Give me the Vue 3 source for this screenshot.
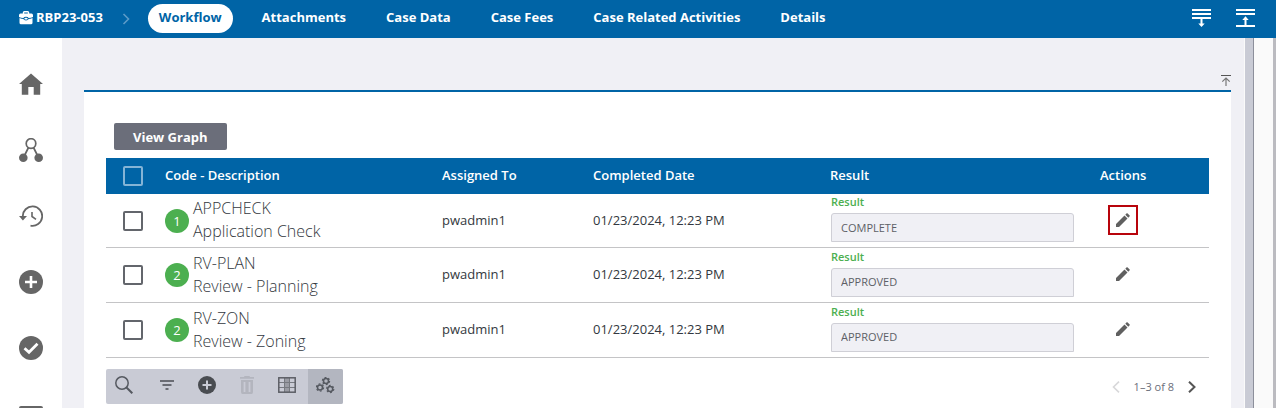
<script setup>
import { ref } from 'vue'

const tabs = ['Workflow', 'Attachments', 'Case Data', 'Case Fees', 'Case Related Activities', 'Details']
const rows = ref([
  { step: 1, code: 'APPCHECK', description: 'Application Check', assigned: 'pwadmin1', date: '01/23/2024, 12:23 PM', result: 'COMPLETE', marked: true },
  { step: 2, code: 'RV-PLAN', description: 'Review - Planning', assigned: 'pwadmin1', date: '01/23/2024, 12:23 PM', result: 'APPROVED', marked: false },
  { step: 2, code: 'RV-ZON', description: 'Review - Zoning', assigned: 'pwadmin1', date: '01/23/2024, 12:23 PM', result: 'APPROVED', marked: false },
])
</script>

<template>
  <div class="shell">
    <header class="topbar">
      <a href="#case" class="case-link">
        <svg width="14" height="14" viewBox="0 0 14 14">
          <path d="M4.500 3V1.600Q4.500 .8 5.300 .8H8.700Q9.500 .8 9.500 1.600V3" fill="none" stroke="#fff" stroke-width="1.400" />
          <path d="M1.500 2.600H12.500Q14 2.600 14 4.200V6Q12 6.900 9.700 7.100A2.900 2 0 0 0 4.300 7.100Q2 6.900 0 6V4.200Q0 2.600 1.500 2.600Z" fill="#fff" />
          <path d="M.5 7Q2.500 7.900 4.300 8.100A2.800 2 0 0 0 9.700 8.100Q11.500 7.900 13.500 7V11.800Q13.500 13.300 12 13.300H2Q.5 13.300 .5 11.800Z" fill="#fff" />
          <ellipse cx="7" cy="7.700" rx="1.700" ry=".9" fill="#fff" />
        </svg>
        <span>RBP23-053</span>
      </a>
      <svg class="crumb" width="8" height="12" viewBox="0 0 8 12"><path d="M1.500 1L6.500 6L1.500 11" fill="none" stroke="#5c9bc8" stroke-width="1.600" /></svg>
      <nav class="tabs">
        <a v-for="(tab, i) in tabs" :key="tab" href="#tab" :class="['tab', { active: i === 0 }]">{{ tab }}</a>
      </nav>
      <div class="top-actions">
        <button type="button" aria-label="Expand all">
          <svg width="19" height="18" viewBox="0 0 19 18" fill="#fff"><path d="M0 0H19V2H0ZM0 4H19V6H0ZM0 8H19V10H0ZM8.500 10H10.500V14.500H12.700L9.500 18L6.300 14.500H8.500Z" /></svg>
        </button>
        <button type="button" aria-label="Collapse all">
          <svg width="19" height="18" viewBox="0 0 19 18" fill="#fff"><path d="M0 0H19V2H0ZM0 4H19V6H0ZM0 16H19V18H0ZM8.500 16V11H6.300L9.500 7.300L12.700 11H10.500V16Z" /></svg>
        </button>
      </div>
    </header>

    <div class="body">
      <nav class="sidebar">
        <a href="#home" aria-label="Home">
          <svg width="24" height="24" viewBox="0 0 24 24"><path d="M12 1.500L24 12H21.200V22.700H14.700V15H9.300V22.700H2.800V12H0Z" fill="#666" /></svg>
        </a>
        <a href="#network" aria-label="Network">
          <svg width="24" height="24" viewBox="0 0 24 24"><path d="M9.500 9.500L4.500 19.500M14.500 9.500L19.500 19.500" stroke="#666" stroke-width="1.700" /><path d="M9 9.700H15" stroke="#666" stroke-width="1.500" /><circle cx="12" cy="5.500" r="4.800" fill="#fff" stroke="#666" stroke-width="1.700" /><circle cx="4.300" cy="19.700" r="4.300" fill="#666" /><circle cx="19.700" cy="19.700" r="4.300" fill="#666" /></svg>
        </a>
        <a href="#history" aria-label="History">
          <svg width="24" height="24" viewBox="0 0 24 24"><path d="M3.800 12.500A9.700 9.700 0 1 1 11.500 21.600" fill="none" stroke="#666" stroke-width="1.800" /><path d="M0 12H8L3.900 16.500Z" fill="#666" /><path d="M13 8V12.500L17 15.300" fill="none" stroke="#666" stroke-width="1.600" /></svg>
        </a>
        <a href="#add" aria-label="Add">
          <svg width="24" height="24" viewBox="0 0 24 24"><circle cx="12" cy="12" r="12" fill="#666" /><path d="M12 6V18M6 12H18" stroke="#fff" stroke-width="2.600" /></svg>
        </a>
        <a href="#tasks" aria-label="Tasks">
          <svg width="24" height="24" viewBox="0 0 24 24"><circle cx="12" cy="12" r="12" fill="#666" /><path d="M5.500 12.200L10 16.300L18.500 7.800" fill="none" stroke="#fff" stroke-width="2.800" /></svg>
        </a>
        <a href="#calendar" aria-label="Calendar">
          <svg width="24" height="24" viewBox="0 0 24 24"><path d="M2 4H22Q24 4 24 6V22H0V6Q0 4 2 4Z" fill="#666" /></svg>
        </a>
      </nav>

      <main class="content">
        <div class="panel-top">
          <button type="button" aria-label="Scroll to top">
            <svg width="10" height="11" viewBox="0 0 10 11"><path d="M0 .5H10" stroke="#555" /><path d="M5 3V11M1.300 6.700L5 3L8.700 6.700" fill="none" stroke="#777" stroke-width="1.200" /></svg>
          </button>
        </div>
        <section class="card">
          <button type="button" class="graph">View Graph</button>
          <table>
            <colgroup>
              <col class="c-check" /><col /><col class="c-assigned" /><col class="c-date" /><col class="c-result" /><col class="c-actions" />
            </colgroup>
            <thead>
              <tr>
                <th class="check"><input type="checkbox" aria-label="Select all" /></th>
                <th>Code - Description</th>
                <th>Assigned To</th>
                <th>Completed Date</th>
                <th>Result</th>
                <th>Actions</th>
              </tr>
            </thead>
            <tbody>
              <tr v-for="(row, i) in rows" :key="row.code">
                <td class="check"><input type="checkbox" :aria-label="`Select ${row.code}`" /></td>
                <td>
                  <div class="code">
                    <span class="step">{{ row.step }}</span>
                    <div class="names"><div>{{ row.code }}</div><div>{{ row.description }}</div></div>
                  </div>
                </td>
                <td class="text">{{ row.assigned }}</td>
                <td class="text">{{ row.date }}</td>
                <td class="result">
                  <label :for="`result-${i}`">Result</label>
                  <input :id="`result-${i}`" v-model="row.result" type="text" readonly />
                </td>
                <td class="text">
                  <button type="button" :class="['edit', { marked: row.marked }]" :aria-label="`Edit ${row.code}`">
                    <svg width="14" height="14" viewBox="0 0 14 14" fill="#606060"><path d="M0 14V11L8.500 2.500L11.500 5.500L3 14ZM9.300 1.700L10.700 .3Q11 0 11.400 .3L13.700 2.600Q14 3 13.700 3.300L12.300 4.700Z" /></svg>
                  </button>
                </td>
              </tr>
            </tbody>
          </table>
          <footer class="table-foot">
            <div class="tools">
              <button type="button" aria-label="Search"><svg width="18" height="18" viewBox="0 0 18 18" fill="none" stroke="#555960"><circle cx="7" cy="7" r="6.200" stroke-width="1.500" /><path d="M11.500 11.500L17.300 17.300" stroke-width="2" /></svg></button>
              <button type="button" aria-label="Filter"><svg width="14" height="10" viewBox="0 0 14 10"><path d="M0 1H14M2.500 5H11.500M5.500 9H8.500" stroke="#4b4e54" stroke-width="1.700" /></svg></button>
              <button type="button" aria-label="Add row"><svg width="18" height="18" viewBox="0 0 18 18"><circle cx="9" cy="9" r="9" fill="#494c51" /><path d="M9 4.500V13.500M4.500 9H13.500" stroke="#c9cbd5" stroke-width="2" /></svg></button>
              <button type="button" aria-label="Delete" disabled><svg width="14" height="18" viewBox="0 0 14 18"><path d="M0 1H4L4.500 0H9.500L10 1H14V2.700H0Z" fill="#b3b5be" /><path d="M1 4H13V16Q13 18 11.500 18H2.500Q1 18 1 16Z" fill="#b3b5be" /><path d="M4.500 6V16M9.500 6V16" stroke="#c9cbd5" stroke-width="1.800" /></svg></button>
              <button type="button" aria-label="Columns"><svg width="18" height="16" viewBox="0 0 18 16"><rect x="6.500" y="1" width="5" height="14" fill="#9a9ca4" /><path d="M1 5.500H17M1 10.500H17M6.500 1V15M11.500 1V15" stroke="#777a81" stroke-width="1" /><rect x=".8" y=".8" width="16.400" height="14.400" fill="none" stroke="#5b5e65" stroke-width="1.500" /></svg></button>
              <button type="button" class="on" aria-label="Settings">
                <svg width="19" height="17" viewBox="0 0 19 17" fill="none" stroke="#555960">
                  <g v-for="(p, k) in [[10, 4], [4, 10.500], [14.200, 12]]" :key="k">
                    <circle :cx="p[0]" :cy="p[1]" r="2.500" stroke-width="1.500" />
                    <circle :cx="p[0]" :cy="p[1]" r="3.600" stroke-width="1.200" stroke-dasharray="1.885 1.885" />
                  </g>
                </svg>
              </button>
            </div>
            <div class="pager">
              <button type="button" aria-label="Previous page" disabled><svg width="8" height="12" viewBox="0 0 8 12"><path d="M7 .7L1.500 6L7 11.300" fill="none" stroke="#d8d8da" stroke-width="1.600" /></svg></button>
              <span>1–3 of 8</span>
              <button type="button" aria-label="Next page"><svg width="8" height="12" viewBox="0 0 8 12"><path d="M1 .7L6.500 6L1 11.300" fill="none" stroke="#555" stroke-width="2" /></svg></button>
            </div>
          </footer>
        </section>
      </main>
      <div class="splitter"></div>
      <aside class="side-panel"></aside>
    </div>
  </div>
</template>

<style>
body { margin: 0; }
</style>

<style scoped>
.shell { display: flex; flex-direction: column; height: 100vh; overflow: hidden; font-family: "Open Sans", "Noto Sans", sans-serif; font-size: 13px; color: #333840; background: #fff; }
.shell * { box-sizing: border-box; }
button { display: inline-flex; align-items: center; justify-content: center; padding: 0; border: 0; background: none; font: inherit; }
a { color: inherit; text-decoration: none; }
svg { display: block; flex: none; }

.topbar { display: flex; flex: none; align-items: center; height: 38px; padding: 0 21px 2px 19px; background: #0064a6; color: #fff; font-weight: 700; }
.case-link { display: flex; align-items: center; gap: 3px; }
.case-link span { padding-bottom: 2px; }
.crumb { margin: 2px 18px 0 19px; }
.tabs { display: flex; align-items: center; gap: 18px; }
.tab { padding: 0 11px 2px; line-height: 27px; border-radius: 15px; white-space: nowrap; }
.tab.active { background: #fff; color: #0064a6; }
.top-actions { display: flex; gap: 25px; margin-left: auto; }

.body { display: flex; flex: 1; min-height: 0; }
.sidebar { display: flex; flex: none; flex-direction: column; align-items: center; gap: 42px; width: 62px; padding-top: 34px; }
.content { flex: 1; min-width: 0; padding: 0 13px 0 22px; background: #f0f0f5; border-right: 1px solid #fafafa; }
.panel-top { display: flex; align-items: flex-end; justify-content: flex-end; height: 52px; padding-bottom: 4px; }
.card { min-height: 100%; padding: 31px 22px 0; border-top: 2px solid #0064a6; background: #fff; }
.graph { height: 27px; margin: 0 8px 8px; padding: 0 19px; border-radius: 2px; background: #6b6e7a; color: #fff; font-weight: 700; }
.splitter { flex: none; width: 9px; border-right: 1px solid #8c8f9b; background: #c9cbd5; }
.side-panel { flex: none; width: 22px; border-right: 3px solid #bbbbc0; background: #fafafa; }

table { width: 100%; table-layout: fixed; border-collapse: separate; border-spacing: 0; }
.c-check { width: 59px; }
.c-assigned { width: 151px; }
.c-date { width: 237px; }
.c-result { width: 270px; }
.c-actions { width: 109px; }
th { height: 36px; padding: 0 0 2px; background: #0064a6; color: #fff; font-weight: 600; text-align: left; }
td { height: 55px; padding: 0; border-bottom: 1px solid #c4c4c6; }
tr:first-child td { height: 54px; }
td.text { padding-bottom: 2px; }
.check { padding: 0 0 0 17px; }
.check input { display: block; appearance: none; width: 20px; height: 20px; margin: 0; border: 2px solid #63666c; border-radius: 2px; }
th.check input { border-color: #84b4d6; }
.code { display: flex; align-items: center; gap: 4px; }
.step { display: flex; flex: none; align-items: center; justify-content: center; width: 24px; height: 24px; border-radius: 50%; background: #4caf50; color: #fff; }
.names { padding-bottom: 1px; font-size: 16px; line-height: 23px; font-weight: 300; }
.result { padding: 0 0 4px 1px; }
.result label { display: block; color: #4caf50; font-size: 11px; font-weight: 600; line-height: 14px; }
.result input { display: block; width: 243px; height: 29px; margin-top: 4px; padding: 0 9px 1px; border: 1px solid #cfcfd6; border-radius: 3px 3px 0 0; background: #f0f0f5; color: #5d6066; font: inherit; font-size: 11px; }
.edit { width: 30px; height: 30px; margin-left: 8px; vertical-align: middle; }
.edit.marked { border: 2px solid #b8040c; }

.table-foot { display: flex; justify-content: space-between; align-items: center; margin-top: 11px; }
.tools { display: flex; border-radius: 2px; background: #c9cbd5; overflow: hidden; }
.tools button { width: 40px; height: 35px; padding: 0 2px 3px 0; }
.tools button:first-child { width: 42px; padding-right: 7px; }
.tools .on { width: 35px; padding-right: 0; background: #b3b6c0; }
.pager { display: flex; align-items: center; gap: 14px; padding-right: 13px; color: #6b6e7a; font-size: 11px; }
</style>
